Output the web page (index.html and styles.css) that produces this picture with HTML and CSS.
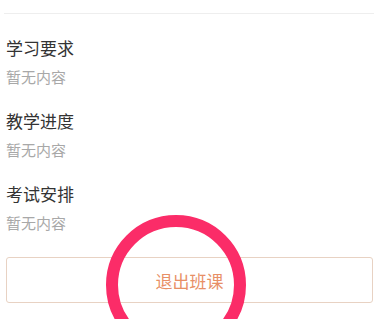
FILE: index.html
```html
<!DOCTYPE html>
<html lang="zh-CN">
<head>
    <meta charset="UTF-8">
    <title>班课信息</title>
    <link rel="stylesheet" href="styles.css">
</head>
<body>
<div class="page">
    <!-- 分割线 -->
    <div class="line"></div>

    <!-- 信息列表 -->
    <div class="info">
        <div class="item">
            <h3 class="title">学习要求</h3>
            <p class="desc">暂无内容</p>
        </div>
        <div class="item">
            <h3 class="title">教学进度</h3>
            <p class="desc">暂无内容</p>
        </div>
        <div class="item">
            <h3 class="title">考试安排</h3>
            <p class="desc">暂无内容</p>
        </div>
    </div>

    <!-- 退出按钮 -->
    <div class="quit">退出班课</div>

    <!-- 标注圆圈 -->
    <div class="mark"></div>
</div>
</body>
</html>
```

FILE: styles.css
```css
*{
    margin: 0;
    padding: 0;
    box-sizing: border-box;
}
body{
    background: #fff;
    font-family: "Noto Sans CJK SC", "Noto Sans", sans-serif;
}
.page{
    width: 385px;
    height: 319px;
    position: relative;
    overflow: hidden;
    padding: 13px 12px 0 6px;
}
/*分割线*/
.line{
    height: 1px;
    margin-left: -2px;
    margin-right: -1px;
    background-color: #eeeeee;
}
/*信息列表*/
.info{
    display: flex;
    flex-direction: column;
}
.item{
    padding-top: 22px;
}
.item .title{
    font-size: 17px;
    line-height: 24px;
    font-weight: normal;
    color: #333;
}
.item .desc{
    margin-top: 7px;
    font-size: 15px;
    line-height: 20px;
    color: #a8a8a8;
}
/*退出按钮*/
.quit{
    margin-top: 24px;
    height: 46px;
    width: 367px;
    border: 1px solid #e8d2c3;
    border-radius: 3px;
    display: flex;
    align-items: center;
    justify-content: center;
    font-size: 17px;
    color: #e88f66;
}
/*标注圆圈*/
.mark{
    position: absolute;
    left: 106px;
    top: 215px;
    width: 140px;
    height: 140px;
    border: 12px solid #fb2c68;
    border-radius: 50%;
}
```
